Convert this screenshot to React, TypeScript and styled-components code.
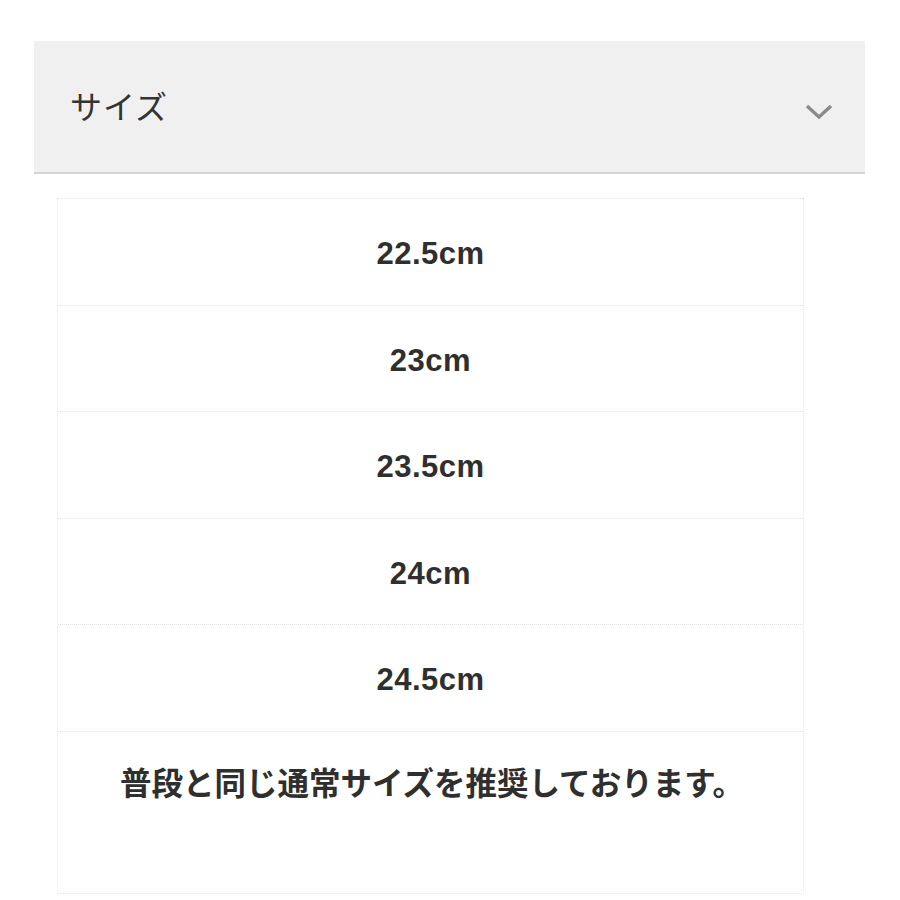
import React from "react";
import styled, { createGlobalStyle } from "styled-components";

const GlobalStyle = createGlobalStyle`
  html, body {
    margin: 0;
    padding: 0;
    background: #ffffff;
  }
  body {
    font-family: "Liberation Sans", "Noto Sans CJK JP", sans-serif;
    color: #333333;
  }
`;

const Page = styled.div`
  padding: 41px 35px 0 34px;
  display: flex;
  flex-direction: column;
`;

const AccordionHeader = styled.div`
  height: 131px;
  background: #f0f0f0;
  border-bottom: 2px solid #d6d6d6;
  display: flex;
  align-items: center;
  justify-content: space-between;
  padding: 0 32px 0 36px;
`;

const HeaderTitle = styled.span`
  font-family: "Noto Sans CJK JP", sans-serif;
  font-size: 32px;
  font-weight: 400;
  color: #333333;
  letter-spacing: 1px;
  margin-top: -4px;
`;

const Chevron = styled.svg`
  width: 28px;
  height: 16px;
  margin-top: 11px;
`;

const SizeTable = styled.div`
  margin: 24px 0 0 23px;
  width: 745px;
  border-left: 1px dotted #ececec;
  border-right: 1px dotted #e6e6e6;
  border-bottom: 1px dotted #e4e4e4;
  display: flex;
  flex-direction: column;
`;

const SizeRow = styled.div`
  height: 106.5px;
  box-sizing: border-box;
  border-top: 1px dotted #e4e4e4;
  padding-top: 5px;
  display: flex;
  align-items: center;
  justify-content: center;
  font-family: "Liberation Sans", Arial, sans-serif;
  font-size: 31px;
  font-weight: 700;
  color: #2f2f2f;
  letter-spacing: 0.5px;
`;

const NoteRow = styled.div`
  height: 162px;
  box-sizing: border-box;
  border-top: 1px dotted #e4e4e4;
  padding: 26px 0 0 3px;
  text-align: center;
  font-family: "Noto Sans CJK JP", sans-serif;
  font-size: 31.5px;
  line-height: 46px;
  font-weight: 700;
  color: #2f2f2f;
`;

const sizes = ["22.5cm", "23cm", "23.5cm", "24cm", "24.5cm"];

export default function App() {
  return (
    <>
      <GlobalStyle />
      <Page>
        <AccordionHeader>
          <HeaderTitle>サイズ</HeaderTitle>
          <Chevron viewBox="0 0 28 16" aria-hidden="true">
            <polyline
              points="2,2 14,13 26,2"
              fill="none"
              stroke="#8a8a8a"
              strokeWidth="3.4"
              strokeLinecap="butt"
              strokeLinejoin="miter"
            />
          </Chevron>
        </AccordionHeader>
        <SizeTable>
          {sizes.map((s) => (
            <SizeRow key={s}>{s}</SizeRow>
          ))}
          <NoteRow>普段と同じ通常サイズを推奨しております。</NoteRow>
        </SizeTable>
      </Page>
    </>
  );
}
